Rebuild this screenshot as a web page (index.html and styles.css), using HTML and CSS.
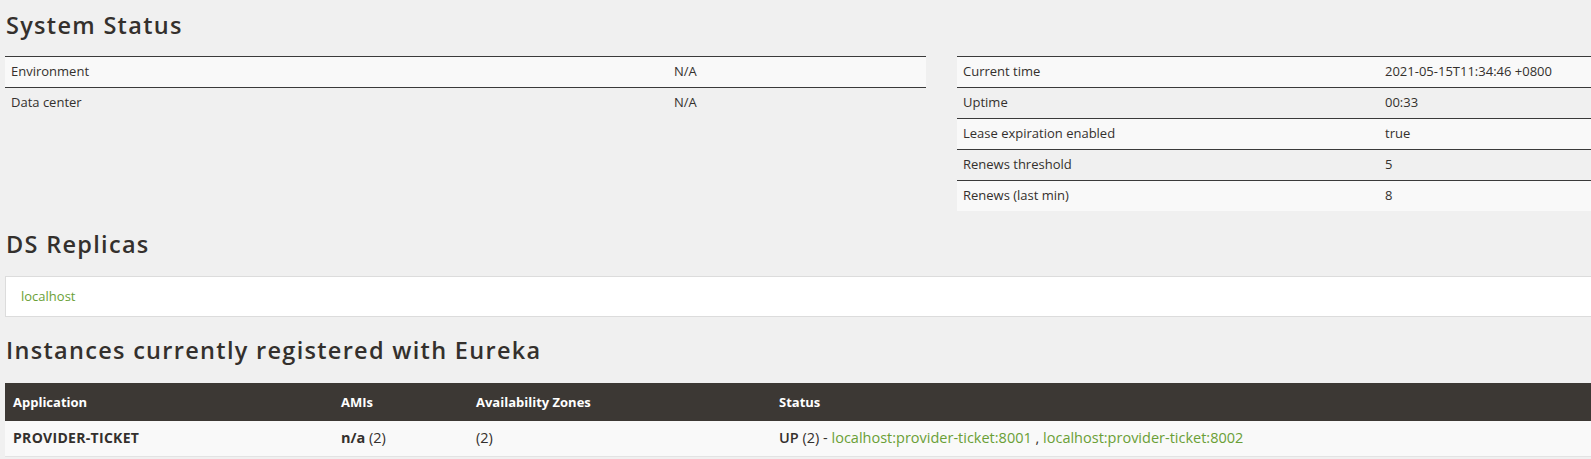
FILE: index.html
```html
<!DOCTYPE html>
<html lang="en">
<head>
<meta charset="utf-8">
<title>Eureka</title>
<link rel="stylesheet" href="styles.css">
</head>
<body>
<div class="page">
  <h2 class="title first">System Status</h2>
  <div class="cols">
    <div class="col">
      <table class="kv kv-left">
        <tbody>
          <tr><td class="k">Environment</td><td>N/A</td></tr>
          <tr><td class="k">Data center</td><td>N/A</td></tr>
        </tbody>
      </table>
    </div>
    <div class="col">
      <table class="kv kv-right">
        <tbody>
          <tr><td class="k">Current time</td><td>2021-05-15T11:34:46 +0800</td></tr>
          <tr><td class="k">Uptime</td><td>00:33</td></tr>
          <tr><td class="k">Lease expiration enabled</td><td>true</td></tr>
          <tr><td class="k">Renews threshold</td><td>5</td></tr>
          <tr><td class="k">Renews (last min)</td><td>8</td></tr>
        </tbody>
      </table>
    </div>
  </div>

  <h2 class="title replicas">DS Replicas</h2>
  <ul class="list-group">
    <li class="list-item"><a href="#">localhost</a></li>
  </ul>

  <h2 class="title instances-title">Instances currently registered with Eureka</h2>
  <table class="instances">
    <thead>
      <tr>
        <th class="c-app">Application</th>
        <th class="c-ami">AMIs</th>
        <th class="c-zone">Availability Zones</th>
        <th>Status</th>
      </tr>
    </thead>
    <tbody>
      <tr>
        <td class="app-name">PROVIDER-TICKET</td>
        <td><b>n/a</b> (2)</td>
        <td>(2)</td>
        <td><span class="strong">UP</span> (2) - <a href="#">localhost:provider-ticket:8001</a> , <a href="#">localhost:provider-ticket:8002</a></td>
      </tr>
    </tbody>
  </table>
</div>
</body>
</html>
```
FILE: styles.css
```css
html, body {
  margin: 0;
  padding: 0;
  overflow: hidden;
  background: #f0f0f0;
}
body {
  font-family: "Open Sans", "Noto Sans", sans-serif;
  font-size: 13px;
  color: #34302d;
}
.page {
  width: 1873px;
  padding-left: 5px;
}
a {
  color: #6a9f36;
  text-decoration: none;
}
.title {
  font-family: "Open Sans", "Noto Sans", sans-serif;
  font-weight: 600;
  font-size: 23.5px;
  line-height: 26px;
  letter-spacing: 1.3px;
  color: #34302d;
  margin: 0;
  padding-left: 1px;
}
.title.first {
  padding-top: 12px;
  padding-bottom: 18px;
}
.cols {
  display: flex;
  gap: 31px;
}
.col {
  width: 921px;
  flex: none;
}
.kv {
  width: 100%;
  border-collapse: collapse;
}
.kv td {
  border-top: 1px solid #3a3a3a;
  padding: 5px 6px 7px;
  line-height: 18px;
  height: 18px;
  color: #34302d;
}
.kv tr:nth-child(odd) td {
  background: #f9f9f9;
}
.kv-left .k { width: 651px; }
.kv-right .k { width: 410px; }

.title.replicas {
  padding-top: 20px;
  padding-bottom: 19px;
}
.list-group {
  list-style: none;
  margin: 0;
  padding: 0;
}
.list-item {
  background: #fff;
  border: 1px solid #dcdcdc;
  padding: 10px 15px;
  line-height: 19px;
}
.title.instances-title {
  padding-top: 20px;
  padding-bottom: 20px;
}
.instances {
  width: 100%;
  border-collapse: collapse;
  table-layout: fixed;
}
.instances th {
  background: #3c3834;
  color: #fff;
  text-align: left;
  font-weight: 700;
  padding: 10px 8px 10px;
  line-height: 18px;
}
.instances td {
  background: #f9f9f9;
  padding: 8px 8px 9px;
  line-height: 18px;
  font-size: 14.5px;
  border-bottom: 1px solid #e3e3e3;
  white-space: nowrap;
}
.instances .c-app { width: 312px; }
.instances .c-ami { width: 119px; }
.instances .c-zone { width: 287px; }
.strong { font-weight: 600; }
.instances .app-name { font-weight: 700; font-size: 14px; letter-spacing: 0.3px; }
.instances b { font-weight: 700; }
```
